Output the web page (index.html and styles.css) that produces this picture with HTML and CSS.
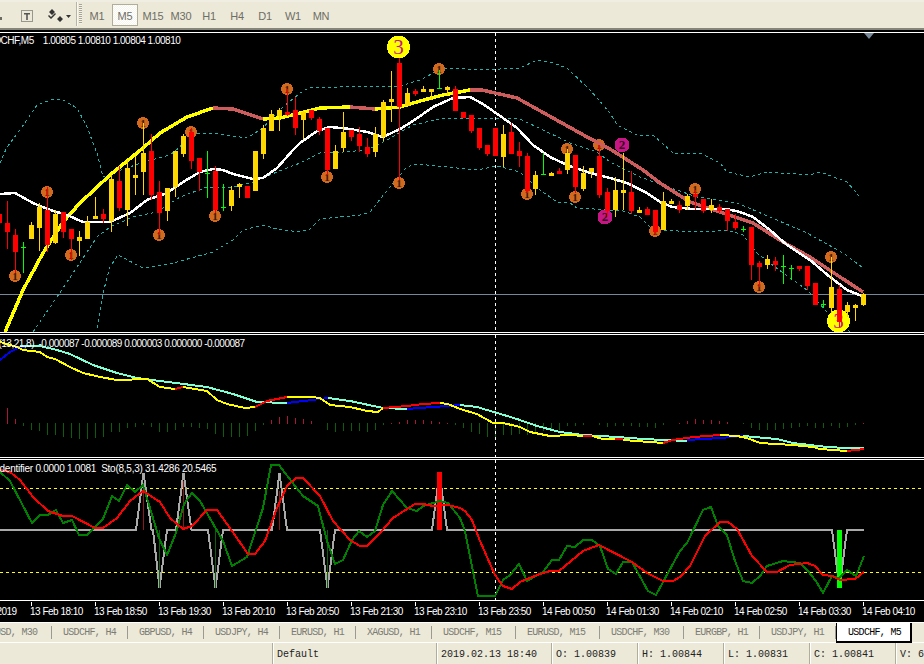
FILE: index.html
```html
<!DOCTYPE html>
<html lang="en">
<head>
<meta charset="utf-8">
<title>USDCHF,M5</title>
<link rel="stylesheet" href="styles.css">
</head>
<body>
<div class="app">
  <header class="toolbar">
    <span class="stub"></span>
    <svg class="tool tool-text" viewBox="0 0 14 14" width="14" height="14"><rect class="dot-box" x="1.5" y="1.5" width="11" height="11"/><path class="tee" d="M4 4h6v1.500H7.800V11H6.200V5.500H4z"/></svg>
    <svg class="tool tool-arrows" viewBox="0 0 24 14" width="24" height="14"><path class="glyph" d="M5 0l3 3-3 3-3-3zM13 7l3 3-3 3-3-3zM1 7l1-1 2 2 4-4 1 1-5 5zM19 6h5l-2.500 3z"/></svg>
    <span class="sep"></span>
    <span class="grip"></span>
    <nav class="periods">
      <span class="period">M1</span>
      <span class="period is-active">M5</span>
      <span class="period">M15</span>
      <span class="period">M30</span>
      <span class="period">H1</span>
      <span class="period">H4</span>
      <span class="period">D1</span>
      <span class="period">W1</span>
      <span class="period">MN</span>
    </nav>
  </header>

  <main class="chart">
    <section class="pane pane-main">
      <div class="legend legend-main">USDCHF,M5    1.00805 1.00810 1.00804 1.00810</div>
      <span class="shift-mark"></span>
      <svg class="plot" viewBox="0 33 924 299" width="924" height="299">
        <line class="level" x1="0" y1="294.500" x2="924" y2="294.500"/>
        <line class="cross" x1="495.500" y1="33" x2="495.500" y2="332"/>
        <polyline class="band" points="0,163 7,147 20,130 37,105 53,99 63,100 77,108 87,127 97,153 103,177 115,172 147,161 170,155 180,147 190,133 213,133 247,138 263,128 277,112 300,93 310,87 340,87 368,86 375,87 400,86 420,80 443,68 487,70 500,69 520,68 537,60 550,62 567,68 590,90 610,113 617,125 637,135 653,135 673,153 700,153 720,163 727,172 750,177 767,172 810,175 820,172 847,182 860,197"/>
        <polyline class="band" points="33,332 57,297 97,237 110,227 133,217 157,212 180,197 207,187 233,187 253,182 277,172 300,163 320,153 343,152 367,150 387,140 413,125 440,119 460,118 520,119 543,130 570,143 597,152 610,162 640,177 677,190 697,197 737,203 770,217 807,233 843,253 862,267"/>
        <polyline class="band" points="97,328 103,293 110,267 118,255 143,268 173,263 213,252 233,240 243,230 263,225 277,229 300,232 310,229 320,219 360,215 370,212 393,183 407,167 417,164 477,170 497,166 520,172 540,190 557,202 570,203 577,208 610,210 623,211 640,217 653,230 703,232 727,230 743,235 757,253 783,273 807,290 827,312 850,332"/>
        <g class="mk">
          <g class="mk-o"><circle cx="15" cy="276" r="6"/><text x="15" y="280">1</text></g>
          <g class="mk-o"><circle cx="47" cy="192" r="6"/><text x="47" y="196">1</text></g>
          <g class="mk-o"><circle cx="71" cy="255" r="6"/><text x="71" y="259">1</text></g>
          <g class="mk-o"><circle cx="143" cy="123" r="6"/><text x="143" y="127">1</text></g>
          <g class="mk-o"><circle cx="159" cy="235" r="6"/><text x="159" y="239">1</text></g>
          <g class="mk-o"><circle cx="191" cy="132" r="6"/><text x="191" y="136">1</text></g>
          <g class="mk-o"><circle cx="215" cy="216" r="6"/><text x="215" y="220">1</text></g>
          <g class="mk-o"><circle cx="287" cy="89" r="6"/><text x="287" y="93">1</text></g>
          <g class="mk-o"><circle cx="327" cy="177" r="6"/><text x="327" y="181">1</text></g>
          <g class="mk-o"><circle cx="399" cy="183" r="6"/><text x="399" y="187">1</text></g>
          <g class="mk-o"><circle cx="439" cy="69" r="6"/><text x="439" y="73">1</text></g>
          <g class="mk-o"><circle cx="527" cy="194" r="6"/><text x="527" y="198">1</text></g>
          <g class="mk-o"><circle cx="567" cy="149" r="6"/><text x="567" y="153">1</text></g>
          <g class="mk-o"><circle cx="575" cy="197" r="6"/><text x="575" y="201">1</text></g>
          <g class="mk-o"><circle cx="599" cy="145" r="6"/><text x="599" y="149">1</text></g>
          <g class="mk-o"><circle cx="655" cy="231" r="6"/><text x="655" y="235">1</text></g>
          <g class="mk-o"><circle cx="695" cy="189" r="6"/><text x="695" y="193">1</text></g>
          <g class="mk-o"><circle cx="759" cy="287" r="6"/><text x="759" y="291">1</text></g>
          <g class="mk-o"><circle cx="831" cy="257" r="6"/><text x="831" y="261">1</text></g>
          <g class="mk-m"><circle cx="605" cy="217" r="7.500"/><text x="605" y="221">2</text></g>
          <g class="mk-m"><circle cx="622" cy="145" r="7.500"/><text x="622" y="149">2</text></g>
          <g class="mk-y"><circle cx="398.500" cy="47" r="11.500"/><text x="398.500" y="54">3</text></g>
          <g class="mk-y"><circle cx="838.500" cy="321" r="11.500"/><text x="838.500" y="328">3</text></g>
        </g>
        <polyline class="ma ma-y" points="5,332 23,290 43,253 63,222 80,203 110,175 143,148 160,133 187,117 213,108"/>
        <polyline class="ma ma-p" points="213,108 233,109 263,119"/>
        <polyline class="ma ma-y" points="263,119 280,118 300,113 320,108 350,107"/>
        <polyline class="ma ma-p" points="350,107 375,109"/>
        <polyline class="ma ma-y" points="375,109 400,107 420,101 443,95 470,90"/>
        <polyline class="ma ma-p" points="470,90 482,90 517,98 553,118 587,137 610,149 643,170 660,183 690,202 720,212 753,223 783,242 810,257 837,275 863,292"/>
        <polyline class="ma ma-w" points="0,194 15,193 33,203 50,210 67,215 83,222 110,222 130,213 147,200 167,193 183,182 200,172 213,169 223,170 233,174 253,179 263,178 277,168 293,150 300,143 317,131 330,127 350,129 367,132 383,137 400,129 413,121 433,107 453,98 470,97 483,104 503,118 517,128 533,145 550,157 567,165 587,172 610,178 627,183 647,193 660,202 672,207 693,209 727,209 740,212 753,217 770,230 787,245 810,260 830,277 847,290 862,296"/>
        <path class="wick wick-r" d="M7.500 201V249M15.500 229V273M47.500 187V252M63.500 212V238M71.500 229V260M103.500 209V223M119.500 166V211M151.500 134V200M159.500 181V235M191.500 128V169M199.500 158V191M215.500 166V213M287.500 89V116M295.500 97V135M311.500 110V120M319.500 117V135M327.500 128V175M351.500 130V141M359.500 127V152M367.500 138V157M399.500 58V180M415.500 89V96M455.500 86V111M471.500 115V133M479.500 128V150M487.500 145V156M511.500 123V154M519.500 142V167M527.500 153V193M559.500 168V174M575.500 155V193M599.500 145V198M607.500 188V217M631.500 171V214M647.500 207V215M655.500 210V235M679.500 201V213M695.500 190V210M703.500 199V213M719.500 204V213M727.500 209V231M735.500 214V230M751.500 227V280M759.500 261V287M775.500 257V271M799.500 266V271M807.500 266V290M839.500 285V327"/>
        <path class="body body-r" d="M-.5 214V223M7.500 223V232M15.500 235V252M47.500 210V245M63.500 212V232M71.500 229V239M103.500 214V219M119.500 181V208M151.500 151V195M159.500 192V213M191.500 132V161M199.500 158V172M215.500 171V210M247.500 186V198M287.500 112V115M295.500 110V128M311.500 110V118M319.500 119V131M327.500 128V170M351.500 130V137M359.500 134V146M367.500 147V154M399.500 63V107M415.500 91V94M455.500 89V111M463.500 112V118M471.500 115V131M479.500 128V148M487.500 145V154M495.500 128V156M511.500 132V154M519.500 151V156M527.500 156V191M559.500 171V174M575.500 155V187M599.500 156V195M607.500 192V211M631.500 192V211M647.500 209V215M655.500 210V232M679.500 205V210M695.500 194V197M703.500 199V211M719.500 207V211M727.500 209V221M735.500 222V228M751.500 227V265M759.500 263V267M775.500 261V265M799.500 266V269M807.500 266V286M815.500 283V305M839.500 289V322"/>
        <path class="wick wick-g" d="M31.500 222V239M39.500 203V251M55.500 210V244M79.500 231V256M87.500 216V239M95.500 197V219M111.500 175V232M127.500 160V226M135.500 156V195M143.500 123V195M167.500 188V221M175.500 151V197M183.500 134V157M231.500 186V211M239.500 183V198M263.500 125V159M271.500 110V131M279.500 108V131M303.500 110V139M335.500 145V169M343.500 112V152M375.500 127V157M383.500 100V141M391.500 71V122M407.500 88V106M423.500 86V92M431.500 89V100M447.500 86V95M503.500 125V167M535.500 171V195M551.500 172V176M567.500 149V174M583.500 166V191M591.500 168V178M615.500 177V217M623.500 153V210M639.500 207V213M663.500 192V230M671.500 199V204M687.500 194V210M711.500 199V213M767.500 255V269M831.500 257V313M847.500 302V317M855.500 304V321M863.500 293V306"/>
        <path class="body body-g" d="M31.500 225V239M39.500 207V228M55.500 214V243M79.500 237V241M87.500 222V239M95.500 216V219M111.500 179V221M127.500 168V210M135.500 175V178M143.500 153V172M167.500 188V211M175.500 151V187M183.500 136V154M231.500 190V206M239.500 184V187M255.500 151V191M263.500 128V154M271.500 114V131M279.500 110V116M303.500 112V120M335.500 151V169M343.500 132V148M375.500 134V152M383.500 102V137M391.500 99V102M407.500 93V106M423.500 89V92M431.500 89V92M447.500 87V90M503.500 134V157M535.500 175V189M551.500 173V176M567.500 153V170M583.500 173V189M591.500 168V172M615.500 190V210M623.500 190V193M639.500 210V213M663.500 201V230M671.500 201V204M687.500 196V206M711.500 205V210M767.500 259V265M831.500 287V308M847.500 305V312M855.500 305V308M863.500 294V305"/>
        <path class="wick wick-l" d="M23.500 242V273M21 247.500h5M207.500 151V198M205 173.500h5M223.500 184V211M221 207.500h5M439.500 70V88M437 88.500h5M543.500 153V175M541 174.500h5M743.500 226V232M741 229.500h5M783.500 255V284M781 266.500h5M791.500 265V280M789 268.500h5M823.500 300V308M821 304.500h5"/>
      </svg>
    </section>

    <section class="pane pane-macd">
      <div class="legend legend-macd">MACD(13,21,8)  -0.000087 -0.000089 0.000003 0.000000 -0.000087</div>
      <svg class="plot" viewBox="0 335 924 122" width="924" height="122">
        <path class="hist hist-r" d="M7.500 408V424M15.500 419V424M271.500 420V424M279.500 417V424M287.500 416V424M295.500 418V424M303.500 419V424M311.500 421V424M391.500 423V424M399.500 422V424M407.500 420V424M415.500 420V424M423.500 420V424M431.500 421V424M439.500 422V424M447.500 423V424M679.500 423V424M687.500 421V424M695.500 419V424M703.500 420V424M711.500 420V424M719.500 421V424M727.500 422V424M863.500 423V424"/>
        <path class="hist hist-g" d="M23.500 423V426M31.500 423V430M39.500 423V431M47.500 423V435M55.500 423V435M63.500 423V437M71.500 423V438M79.500 423V439M87.500 423V439M95.500 423V438M103.500 423V437M111.500 423V432M119.500 423V432M127.500 423V428M135.500 423V427M143.500 423V425M151.500 423V427M159.500 423V432M167.500 423V432M175.500 423V430M183.500 423V427M191.500 423V427M199.500 423V428M207.500 423V429M215.500 423V434M223.500 423V437M231.500 423V437M239.500 423V437M247.500 423V436M255.500 423V431M263.500 423V425M327.500 423V430M335.500 423V432M343.500 423V431M351.500 423V431M359.500 423V431M367.500 423V432M375.500 423V430M383.500 423V425M455.500 423V425M463.500 423V428M471.500 423V432M479.500 423V434M487.500 423V437M495.500 423V438M503.500 423V435M511.500 423V435M519.500 423V434M527.500 423V435M535.500 423V433M543.500 423V431M551.500 423V430M559.500 423V430M567.500 423V426M575.500 423V426M583.500 423V425M599.500 423V425M607.500 423V427M615.500 423V426M623.500 423V426M631.500 423V426M639.500 423V427M647.500 423V427M655.500 423V428M663.500 423V425M743.500 423V424M751.500 423V428M759.500 423V430M767.500 423V430M775.500 423V430M783.500 423V429M791.500 423V428M799.500 423V427M807.500 423V426M815.500 423V428M823.500 423V428M831.500 423V426M839.500 423V428M847.500 423V427M855.500 423V425"/>
        <line class="cross" x1="495.500" y1="335" x2="495.500" y2="457"/>
        <polyline class="sig sig-b" points="0,360 10,352 20,347 32,346"/>
        <polyline class="sig sig-a" points="20,346 40,346 57,350 70,354 93,365 117,373 137,378 160,381 207,387 233,394 257,402 287,403"/>
        <polyline class="sig sig-b" points="287,403 312,400 328,398"/>
        <polyline class="sig sig-a" points="328,398 350,401 383,408 407,409"/>
        <polyline class="sig sig-b" points="407,409 433,407 460,405"/>
        <polyline class="sig sig-a" points="460,405 477,407 497,413 517,419 537,426 560,432 583,435 617,437 643,439 687,441"/>
        <polyline class="sig sig-b" points="687,440 720,438 743,436"/>
        <polyline class="sig sig-a" points="743,436 777,439 793,443 827,447 847,448 864,448"/>
        <polyline class="sig sig-y" points="0,342 17,347 23,350 40,352 47,357 55,359 70,367 83,373 100,377 117,380 147,379 160,387 175,389"/>
        <polyline class="sig sig-r" points="175,389 183,387"/>
        <polyline class="sig sig-y" points="183,387 207,391 217,400 227,404 245,408 255,407"/>
        <polyline class="sig sig-r" points="255,407 267,401 287,397"/>
        <polyline class="sig sig-y" points="287,397 312,397 320,398 330,405 350,407 367,411 378,412 383,408"/>
        <polyline class="sig sig-r" points="383,408 407,406 423,404 440,403"/>
        <polyline class="sig sig-y" points="440,403 448,404 460,409 477,414 493,423 503,423 520,427 530,432 550,436 570,435 583,436"/>
        <polyline class="sig sig-r" points="583,436 592,436"/>
        <polyline class="sig sig-y" points="592,436 603,439 615,439"/>
        <polyline class="sig sig-r" points="615,439 623,439"/>
        <polyline class="sig sig-y" points="623,440 650,442 663,443"/>
        <polyline class="sig sig-r" points="663,443 673,440 693,437 720,435"/>
        <polyline class="sig sig-y" points="720,435 737,436 747,438 760,443 793,445 813,447 820,449 847,451"/>
        <polyline class="sig sig-r" points="847,451 864,449"/>
      </svg>
    </section>

    <section class="pane pane-sto">
      <div class="legend legend-sto">Identifier 0.0000 1.0081  Sto(8,5,3) 31.4286 20.5465</div>
      <svg class="plot" viewBox="0 460 924 140" width="924" height="140">
        <line class="guide" x1="0" y1="488.500" x2="924" y2="488.500"/>
        <line class="guide" x1="0" y1="572.500" x2="924" y2="572.500"/>
        <line class="cross" x1="495.500" y1="460" x2="495.500" y2="600"/>
        <polyline class="ident" points="0,530 136,530 143.500,473 151.500,530 153,530 159.500,588 167,530 176,530 183.500,473 191.500,530 208,530 215.500,588 223,530 272,530 279.500,473 287,530 320,530 327.500,588 335,530 432,530 439.500,473 447,530 832,530 839.500,588 847,530 864,530"/>
        <path class="spike spike-r" d="M143.500 491V530M183.500 481V530M279.500 491V530"/>
        <path class="spike spike-g" d="M159.500 530V588M215.500 530V588M327.500 530V588"/>
        <path class="bar bar-r" d="M439.500 472V530"/>
        <path class="bar bar-l" d="M839.500 530V588"/>
        <polyline class="sto sto-g" points="0,472 10,481 32,523 40,515 48,515 56,510 63,523 72,520 79,535 87,535 103,519 112,496 119,501 127,485 135,492 143,485 159,538 167,555 176,533 184,504 192,493 200,501 223,541 232,566 247,557 263,508 271,465 279,465 295,486 303,496 318,506 327,541 335,564 343,560 352,540 359,531 367,537 375,531 383,505 392,491 407,508 417,511 423,506 440,501 448,503 460,518 465,531 478,596 495,596 503,580 510,575 519,564 527,581 543,572 552,560 559,560 567,546 575,547 583,540 592,540 600,546 608,569 616,574 623,562 632,562 648,591 656,595 680,551 687,543 703,510 711,507 718,526 727,535 735,561 743,581 752,583 760,576 767,566 783,561 800,563 807,570 816,581 823,593 832,576 839,578 847,570 856,576 864,556"/>
        <polyline class="sto sto-r" points="0,470 10,472 20,480 33,497 48,511 63,516 72,516 95,528 103,528 117,518 130,501 143,491 160,502 170,518 183,529 192,526 207,510 217,510 232,531 248,554 255,554 265,541 277,508 287,486 296,478 303,478 320,496 333,521 350,540 360,546 367,546 380,533 393,518 415,504 423,504 433,506 448,505 460,508 465,511 472,520 480,541 495,575 503,586 512,589 520,582 537,575 550,571 559,571 583,551 599,545 632,562 647,573 663,581 673,581 680,577 690,566 705,536 720,522 728,522 737,529 752,556 767,572 777,572 790,565 807,563 815,566 823,575 832,576 840,580 855,579 864,572"/>
      </svg>
    </section>

    <div class="axis">
      <span class="tick">13 Feb 2019</span>
      <span class="tick">13 Feb 18:10</span>
      <span class="tick">13 Feb 18:50</span>
      <span class="tick">13 Feb 19:30</span>
      <span class="tick">13 Feb 20:10</span>
      <span class="tick">13 Feb 20:50</span>
      <span class="tick">13 Feb 21:30</span>
      <span class="tick">13 Feb 23:10</span>
      <span class="tick">13 Feb 23:50</span>
      <span class="tick">14 Feb 00:50</span>
      <span class="tick">14 Feb 01:30</span>
      <span class="tick">14 Feb 02:10</span>
      <span class="tick">14 Feb 02:50</span>
      <span class="tick">14 Feb 03:30</span>
      <span class="tick">14 Feb 04:10</span>
    </div>
  </main>

  <div class="tabs">
    <span class="tab tab-long">AUDUSD, M30</span>
    <span class="tab">USDCHF, H4</span>
    <span class="tab">GBPUSD, H4</span>
    <span class="tab">USDJPY, H4</span>
    <span class="tab">EURUSD, H1</span>
    <span class="tab">XAGUSD, H1</span>
    <span class="tab tab-long">USDCHF, M15</span>
    <span class="tab tab-long">EURUSD, M15</span>
    <span class="tab tab-long">USDCHF, M30</span>
    <span class="tab">EURGBP, H1</span>
    <span class="tab">USDJPY, H1</span>
    <span class="tab tab-active">USDCHF, M5</span>
  </div>

  <footer class="status">
    <span class="cell cell-blank"></span>
    <span class="cell cell-profile">Default</span>
    <span class="cell cell-date">2019.02.13 18:40</span>
    <span class="cell cell-o">O: 1.00839</span>
    <span class="cell cell-o">H: 1.00844</span>
    <span class="cell cell-o">L: 1.00831</span>
    <span class="cell cell-o">C: 1.00841</span>
    <span class="cell cell-v">V: 65</span>
  </footer>
</div>
</body>
</html>
```

FILE: styles.css
```css
* { box-sizing: border-box; }
html, body { margin: 0; padding: 0; background: #000; }
body { width: 924px; height: 664px; overflow: hidden; }
.app { width: 924px; height: 664px; display: flex; flex-direction: column; overflow: hidden; }

/* toolbar */
.toolbar {
  height: 30px; flex: none; display: flex; align-items: center;
  background: #ECE9D8; border-bottom: 2px solid #85857A; position: relative;
  box-shadow: inset 0 2px 0 #F0EEE2;
  font: 11px "Liberation Sans", Arial, sans-serif;
}
.stub { width: 2px; height: 3px; background: #6B6B60; margin-top: 9px; margin-right: 18px; flex: none; }
.tool { flex: none; display: block; margin-top: 4px; }
.tool-text { margin-right: 13px; }
.tool-arrows { margin-right: 5px; }
.dot-box { fill: none; stroke: #444; stroke-width: 1; stroke-dasharray: 1 1; }
.tee { fill: #555; }
.glyph { fill: #333; }
.sep { width: 2px; height: 24px; flex: none; background: #F8F7F0; border-left: 1px solid #B8B5A2; margin-right: 1px; }
.grip {
  width: 3px; height: 20px; flex: none; margin-right: 1px;
  background: repeating-linear-gradient(to bottom, #A8A595 0 1px, #F4F3EA 1px 2px);
}
.periods { display: flex; flex: none; margin-top: 2px; }
.period {
  width: 28px; height: 22px; display: flex; align-items: center; justify-content: center;
  color: #6E6E66; font-size: 11px; letter-spacing: -0.2px; padding-top: 1px;
  border: 2px solid transparent;
}
.period.is-active {
  width: 26px; margin: 0 1px; border: 1px solid #B0AD98;
  background: repeating-conic-gradient(#F6F5EE 0 25%, #FFFFFF 0 50%) 0 0 / 2px 2px;
}

/* chart */
.chart { flex: none; height: 592px; background: #000; padding-top: 2px; display: flex; flex-direction: column; }
.pane { position: relative; border-top: 1px solid #fff; border-bottom: 1px solid #fff; margin-bottom: 1px; flex: none; }
.plot { display: block; shape-rendering: crispEdges; }
.legend {
  position: absolute; z-index: 2; top: 2px; white-space: pre; color: #fff;
  font: 10px/12px "Liberation Sans", Arial, sans-serif; letter-spacing: -0.5px;
}
.legend-main { left: -19px; }
.legend-macd { left: -29px; top: 3px; }
.legend-sto { left: -3px; top: 3px; letter-spacing: -0.25px; }
.shift-mark {
  position: absolute; top: 0; left: 864px; width: 0; height: 0; z-index: 2;
  border-left: 5px solid transparent; border-right: 5px solid transparent; border-top: 6px solid #778899;
}

.level { stroke: #778899; stroke-width: 1; }
.cross { stroke: #fff; stroke-width: 1; stroke-dasharray: 3 3; }
.band { fill: none; stroke: #20B2AA; stroke-width: 1; stroke-dasharray: 3 3; }
.ma { fill: none; stroke-linejoin: round; }
.ma-y { stroke: #FFFF00; stroke-width: 3.5; }
.ma-p { stroke: #CD5C5C; stroke-width: 3.5; }
.ma-w { stroke: #FFFFFF; stroke-width: 2.5; }
.wick { fill: none; stroke-width: 1; }
.wick-r { stroke: #FF0000; }
.wick-g { stroke: #FFD700; }
.wick-l { stroke: #00FF00; }
.body { fill: none; stroke-width: 5; }
.body-r { stroke: #FF0000; }
.body-g { stroke: #FFD700; }
.mk text { text-anchor: middle; font-family: "Liberation Serif", serif; font-weight: 700; }
.mk-o circle { fill: #D2691E; }
.mk-o text { fill: #3A1C08; font-size: 11px; }
.mk-m circle { fill: #C71585; }
.mk-m text { fill: #30101F; font-size: 13px; }
.mk-y circle { fill: #FFFF00; }
.mk-y text { fill: #C71585; font-size: 21px; font-weight: 400; }

.hist { fill: none; stroke-width: 1; }
.hist-r { stroke: #A8183A; }
.hist-g { stroke: #0F5C0F; }
.sig { fill: none; stroke-width: 2; }
.sig-a { stroke: #7FFFD4; }
.sig-b { stroke: #0000FF; }
.sig-y { stroke: #FFFF00; }
.sig-r { stroke: #FF0000; }

.guide { stroke: #FFFF00; stroke-width: 1; stroke-dasharray: 3 3; }
.ident { fill: none; stroke: #A9A9A9; stroke-width: 2; }
.spike { fill: none; stroke-width: 1; }
.spike-r { stroke: #8B1A1A; }
.spike-g { stroke: #0F5C0F; }
.bar { fill: none; stroke-width: 5; }
.bar-r { stroke: #FF0000; }
.bar-l { stroke: #00FF00; }
.sto { fill: none; stroke-width: 2; }
.sto-g { stroke: #008000; }
.sto-r { stroke: #FF0000; }

/* time axis */
.axis { height: 21px; flex: none; margin-top: -1px; padding-top: 1px; display: flex; margin-left: -34px; }
.tick {
  width: 64px; flex: none; white-space: nowrap; color: #fff; padding-top: 4px;
  font: 10px/12px "Liberation Sans", Arial, sans-serif; letter-spacing: -0.5px;
  background: linear-gradient(#fff, #fff) 1px 0 / 1px 4px no-repeat;
}

/* tabs */
.tabs {
  height: 21px; flex: none; display: flex; align-items: stretch; background: #ECE9D8;
  border-top: 1px solid #fff; border-bottom: 1px solid #fff; margin-left: -32px;
  font: 10px/18px "Liberation Mono", monospace; color: #7C7C74; letter-spacing: -0.7px;
}
.tab { width: 76px; flex: none; padding-left: 11px; white-space: nowrap; position: relative; margin-top: 3px; margin-bottom: 3px; border-right: 1px solid #9A9A8E; line-height: 13px; }
.tab-long { width: 84px; }
.tab-active {
  width: 76px; margin: 0 0 -1px 0; padding-left: 11px; background: #fff; color: #000; line-height: 19px;
  border: 1px solid #000; border-top: 0; border-right: 2px solid #000; border-bottom: 2px solid #000; border-left: 1px solid #000;
}

/* status bar */
.status {
  height: 21px; flex: none; display: flex; background: #ECE9D8;
  font: 10px/21px "Liberation Mono", monospace; color: #222;
}
.cell { flex: none; padding-left: 4px; padding-top: 1px; border-left: 1px solid #B0AD9A; box-shadow: inset 1px 0 0 #fff; white-space: pre; overflow: hidden; }
.cell-blank { width: 272px; border-left: 0; box-shadow: none; padding: 0; }
.cell-profile { width: 164px; }
.cell-date { width: 115px; }
.cell-o { width: 86px; }
.cell-v { width: 29px; }
```
